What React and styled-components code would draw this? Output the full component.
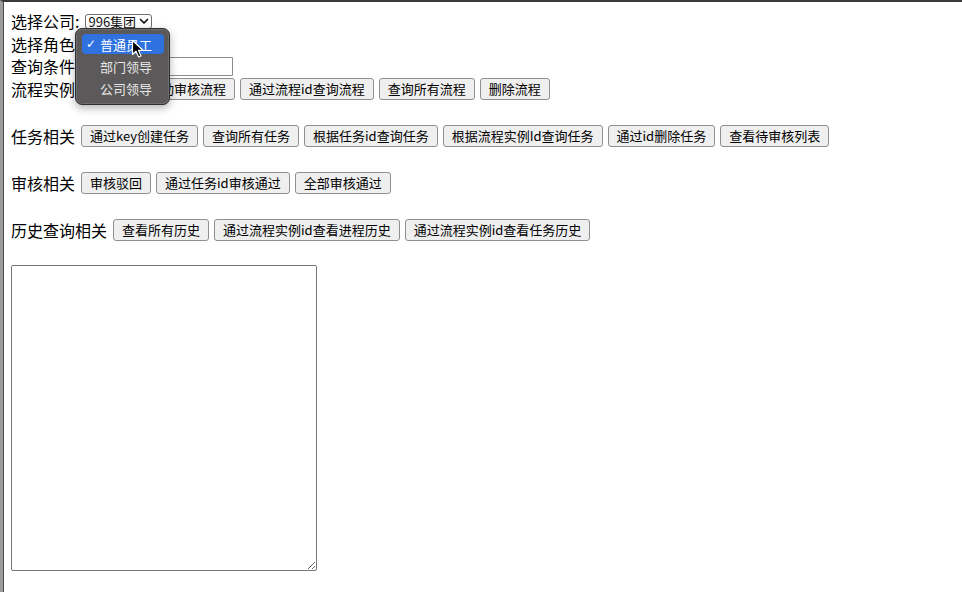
import React from 'react'
import styled, { createGlobalStyle } from 'styled-components'

const GlobalStyle = createGlobalStyle`
  html, body {
    margin: 0;
    padding: 0;
    background: #ffffff;
  }
  body {
    font-family: "Noto Sans CJK SC", "Noto Sans", sans-serif;
    color: #000;
  }
`

const taskButtons = [
  '通过key创建任务',
  '查询所有任务',
  '根据任务id查询任务',
  '根据流程实例Id查询任务',
  '通过id删除任务',
  '查看待审核列表',
]

const reviewButtons = ['审核驳回', '通过任务id审核通过', '全部审核通过']

const historyButtons = ['查看所有历史', '通过流程实例id查看进程历史', '通过流程实例id查看任务历史']

const processButtons = ['一键启动审核流程', '通过流程id查询流程', '查询所有流程', '删除流程']

const roles = ['普通员工', '部门领导', '公司领导']

const Chevron = () => (
  <svg width="10" height="7" viewBox="0 0 10 7">
    <path d="M1.5 1.5 L5 5 L8.5 1.5" fill="none" stroke="#111" strokeWidth="1.7" strokeLinecap="round" strokeLinejoin="round" />
  </svg>
)

const Pointer = () => (
  <svg width="14" height="20" viewBox="0 0 14 20">
    <path
      d="M1.5 1.5 L1.5 15.5 L5 12.2 L7.6 18 L10 17 L7.5 11.3 L12 11.3 Z"
      fill="#000"
      stroke="#fff"
      strokeWidth="1.2"
      strokeLinejoin="round"
    />
  </svg>
)

const App = () => {
  return (
    <>
      <GlobalStyle />
      <Page>
        <TopRow>
          <Label>选择公司:</Label>
          <FakeSelect>
            996集团
            <Chevron />
          </FakeSelect>
        </TopRow>
        <TopRow>
          <Label>选择角色:</Label>
          <FakeSelect>
            普通员工
            <Chevron />
          </FakeSelect>
        </TopRow>
        <TopRow>
          <Label>查询条件:</Label>
          <Input />
        </TopRow>
        <TopRow>
          <Label>流程实例相关</Label>
          {processButtons.map((b) => (
            <Button key={b}>{b}</Button>
          ))}
        </TopRow>

        <SectionRow margin="24px">
          <Label>任务相关</Label>
          {taskButtons.map((b) => (
            <Button key={b}>{b}</Button>
          ))}
        </SectionRow>

        <SectionRow>
          <Label>审核相关</Label>
          {reviewButtons.map((b) => (
            <Button key={b}>{b}</Button>
          ))}
        </SectionRow>

        <SectionRow>
          <Label>历史查询相关</Label>
          {historyButtons.map((b) => (
            <Button key={b}>{b}</Button>
          ))}
        </SectionRow>

        <Output />

        <Menu>
          {roles.map((r, i) => (
            <MenuItem key={r} active={i === 0}>
              <Check>{i === 0 ? '✓' : ''}</Check>
              {r}
            </MenuItem>
          ))}
        </Menu>
        <Cursor>
          <Pointer />
        </Cursor>
      </Page>
    </>
  )
}

const Page = styled.div`
  position: relative;
  min-height: 100vh;
  box-sizing: border-box;
  border-top: 2px solid #3a3a3c;
  border-left: 3px solid #9c9c9c;
  box-shadow: inset 1px 0 0 #4a4a4a;
  padding: 8px 8px 0 8px;
  display: flex;
  flex-direction: column;
  align-items: flex-start;
`

const TopRow = styled.div`
  height: 22.6px;
  display: flex;
  flex-direction: row;
  align-items: center;
  gap: 5px;
`

const SectionRow = styled.div`
  height: 24px;
  display: flex;
  flex-direction: row;
  align-items: center;
  gap: 5px;
  margin-top: ${(props) => props.margin || '23px'};
`

const Label = styled.span`
  font-size: 16px;
  line-height: 20px;
  white-space: nowrap;
  margin-right: 1px;
`

const FakeSelect = styled.span`
  display: inline-flex;
  align-items: center;
  gap: 3px;
  height: 15px;
  box-sizing: border-box;
  border: 1px solid #6f6f6f;
  border-radius: 3px;
  padding: 0 2px 0 2px;
  font-size: 13px;
  line-height: 13px;
  color: #111;
  background: #fff;
`

const Input = styled.span`
  display: inline-block;
  width: 148px;
  height: 19px;
  box-sizing: border-box;
  border: 1px solid #8a8a8a;
  border-radius: 1px;
  background: #fff;
`

const Button = styled.button`
  height: 22px;
  box-sizing: border-box;
  padding: 0 8px;
  border: 1px solid #8f8f8f;
  border-radius: 3px;
  background: #efefef;
  font-family: "Noto Sans CJK SC", "Noto Sans", sans-serif;
  font-size: 13px;
  line-height: 18px;
  color: #000;
  white-space: nowrap;
`

const Output = styled.textarea`
  display: block;
  margin: 23px 0 0 0;
  width: 306px;
  height: 306px;
  box-sizing: border-box;
  border: 1px solid #767676;
  border-radius: 2px;
  padding: 2px;
  font-family: "Liberation Mono", monospace;
  font-size: 13px;
`

const Menu = styled.div`
  position: absolute;
  left: 72px;
  top: 26px;
  width: 95px;
  box-sizing: border-box;
  padding: 5px 5px 6px 6px;
  background: #5b5959;
  border: 1px solid #2f2f2f;
  border-radius: 7px;
  box-shadow: inset 0 0 0 1px #6e6c6c, 0 3px 8px rgba(0, 0, 0, 0.3);
  display: flex;
  flex-direction: column;
  gap: 2px;
`

const MenuItem = styled.div`
  height: 20px;
  display: flex;
  align-items: center;
  border-radius: 4px;
  padding-left: 4px;
  font-size: 13px;
  color: ${(props) => (props.active ? '#ffffff' : '#e6e6e6')};
  background: ${(props) => (props.active ? '#2f72df' : 'transparent')};
  white-space: nowrap;
`

const Check = styled.span`
  width: 14px;
  font-size: 12px;
  font-family: "DejaVu Sans", sans-serif;
  color: #fff;
`

const Cursor = styled.div`
  position: absolute;
  left: 128px;
  top: 37px;
  width: 14px;
  height: 20px;
`

export default App
